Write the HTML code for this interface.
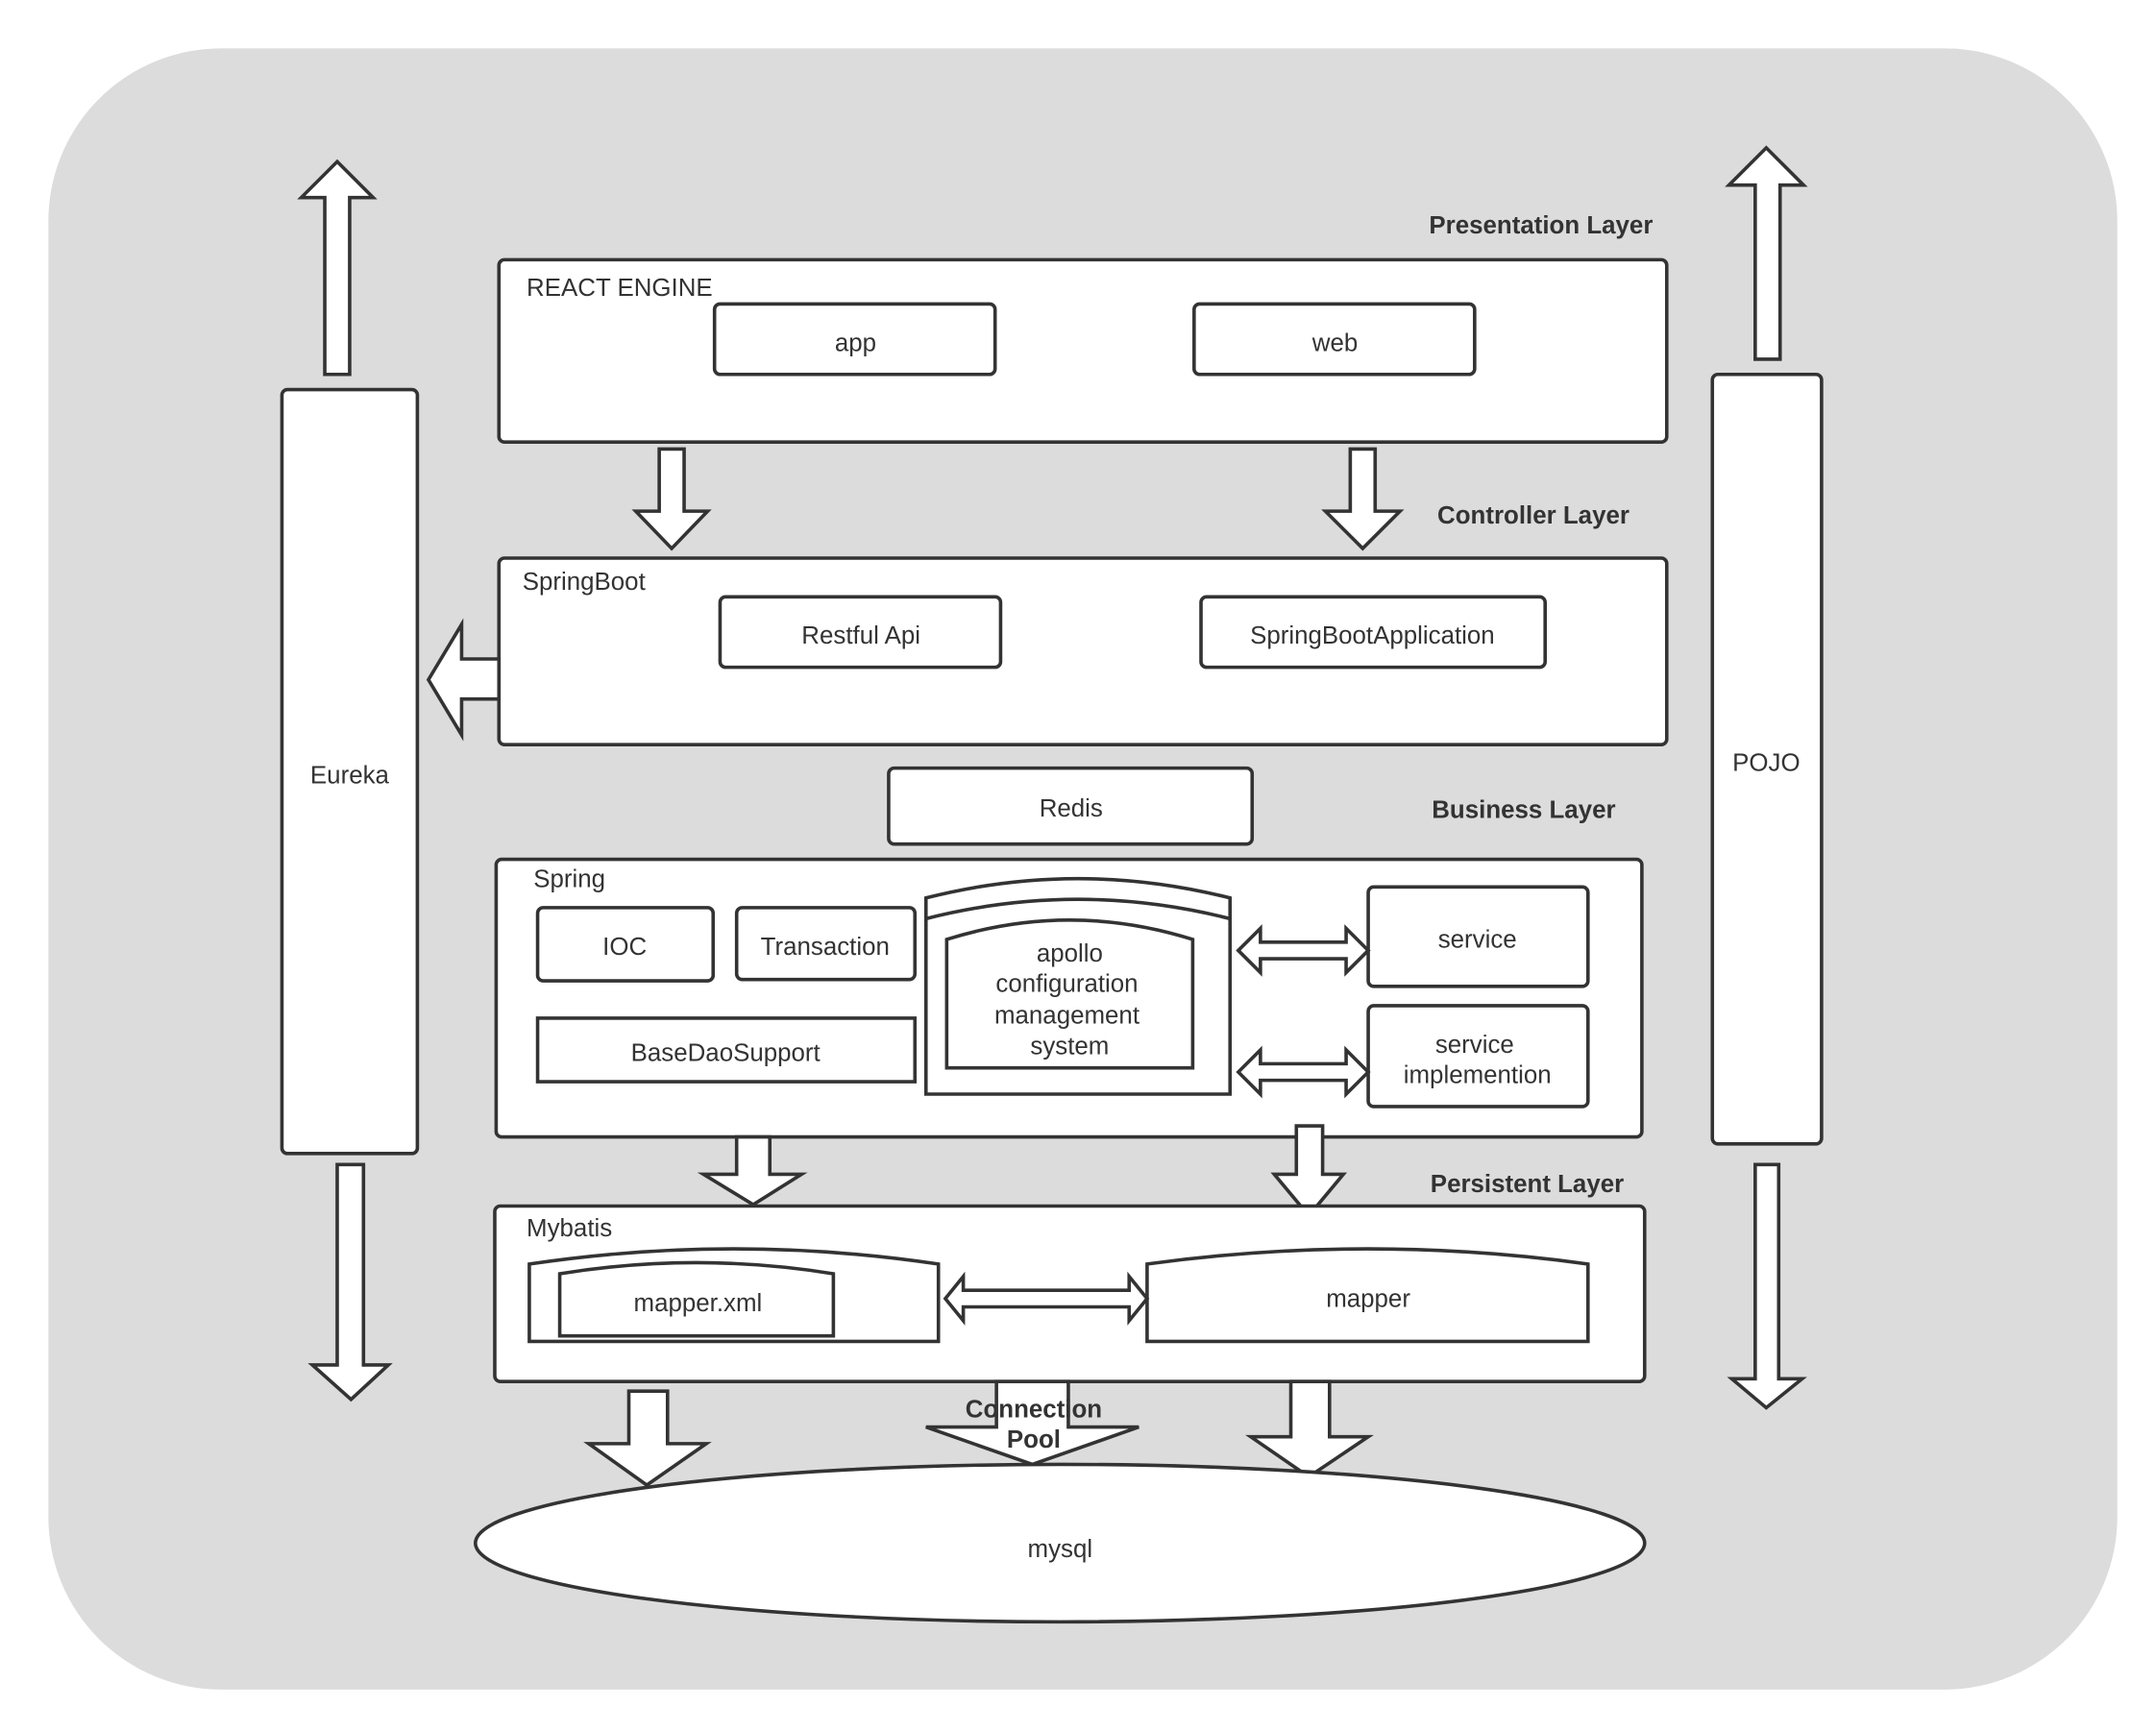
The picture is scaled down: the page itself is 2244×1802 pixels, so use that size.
<!DOCTYPE html>
<html><head><meta charset="utf-8"><style>
html,body{margin:0;padding:0;background:#fff;}
svg{display:block;}
text{font-family:"Liberation Sans","DejaVu Sans",sans-serif;fill:#333;font-size:18px;}
.b{font-weight:bold;font-size:18px;}
</style></head><body>
<svg width="2244" height="1802" viewBox="0 0 1560 1253" preserveAspectRatio="none" xmlns="http://www.w3.org/2000/svg">
<rect x="0" y="0" width="1560" height="1253" fill="#fff"/>
<rect x="35" y="35" width="1497" height="1188" rx="125" fill="#dcdcdc"/>
<g fill="#fff" stroke="#333" stroke-width="2.5" stroke-linejoin="miter">
<!-- side arrows -->
<polygon points="235,271 235,143 218,143 244,117 270,143 253,143 253,271"/>
<polygon points="244,843 244,988 226,988 254,1013 281,988 263,988 263,843"/>
<polygon points="1270,260 1270,134 1251,134 1278,107 1305,134 1288,134 1288,260"/>
<polygon points="1270,843 1270,998 1253,998 1278,1019 1304,998 1287,998 1287,843"/>
<rect x="204" y="282" width="98" height="553" rx="4"/>
<rect x="1239" y="271" width="79" height="557" rx="4"/>
<!-- presentation -->
<rect x="361" y="188" width="845" height="132" rx="4"/>
<rect x="517" y="220" width="203" height="51" rx="4"/>
<rect x="864" y="220" width="203" height="51" rx="4"/>
<polygon points="477,325 477,370 460,370 486,397 512,370 495,370 495,325"/>
<polygon points="977,325 977,370 959,370 986,397 1013,370 995,370 995,325"/>
<!-- springboot -->
<rect x="361" y="404" width="845" height="135" rx="4"/>
<rect x="521" y="432" width="203" height="51" rx="4"/>
<rect x="869" y="432" width="249" height="51" rx="4"/>
<polygon points="361,477 334,477 334,452 310,492 334,532 334,506 361,506"/>
<rect x="643" y="556" width="263" height="55" rx="4"/>
<!-- spring -->
<rect x="359" y="622" width="829" height="201" rx="4"/>
<rect x="389" y="657" width="127" height="53" rx="4"/>
<rect x="533" y="657" width="129" height="52" rx="4"/>
<rect x="389" y="737" width="273" height="46"/>
<path d="M670,792 L670,650 Q780,622 890,650 L890,792 Z"/>
<path d="M670,665 Q780,637 890,665"/>
<path d="M685,773 L685,680 Q774,652 863,680 L863,773 Z"/>
<rect x="990" y="642" width="159" height="72" rx="4"/>
<rect x="990" y="728" width="159" height="73" rx="4"/>
<polygon points="896,688 912,672 912,682 974,682 974,672 990,688 974,704 974,694 912,694 912,704"/>
<polygon points="896,776 912,760 912,770 974,770 974,760 990,776 974,792 974,782 912,782 912,792"/>
<polygon points="533,823 533,850 509,850 545,872 580,850 557,850 557,823"/>
<polygon points="938,815 938,850 922,850 947,880 972,850 957,850 957,815"/>
<!-- mybatis -->
<rect x="358" y="873" width="832" height="127" rx="4"/>
<path d="M383,971 L383,915 Q531,893 679,915 L679,971 Z"/>
<path d="M405,967 L405,922 Q504,906 603,922 L603,967 Z"/>
<path d="M830,971 L830,915 Q990,893 1149,915 L1149,971 Z"/>
<polygon points="684,940 697,924 697,934 817,934 817,924 830,940 817,956 817,946 697,946 697,956"/>
<!-- bottom arrows -->
<polygon points="455,1007 455,1045 426,1045 468,1075 511,1045 483,1045 483,1007"/>
<polygon points="721,1000 721,1033 670,1033 747,1060 824,1033 773,1033 773,1000"/>
<polygon points="934,1000 934,1040 905,1040 947,1069 990,1040 962,1040 962,1000"/>
<ellipse cx="767" cy="1117" rx="423" ry="57"/>
</g>
<text class="b" x="1196" y="169" text-anchor="end">Presentation Layer</text>
<text class="b" x="1179" y="379" text-anchor="end">Controller Layer</text>
<text class="b" x="1169" y="592" text-anchor="end">Business Layer</text>
<text class="b" x="1175" y="863" text-anchor="end">Persistent Layer</text>
<text class="b" x="748" y="1026" text-anchor="middle">Connection</text>
<text class="b" x="748" y="1048" text-anchor="middle">Pool</text>
<text x="381" y="214">REACT ENGINE</text>
<text x="619" y="254" text-anchor="middle">app</text>
<text x="966" y="254" text-anchor="middle">web</text>
<text x="378" y="427">SpringBoot</text>
<text x="623" y="466" text-anchor="middle">Restful Api</text>
<text x="993" y="466" text-anchor="middle">SpringBootApplication</text>
<text x="253" y="567" text-anchor="middle">Eureka</text>
<text x="1278" y="558" text-anchor="middle">POJO</text>
<text x="775" y="591" text-anchor="middle">Redis</text>
<text x="386" y="642">Spring</text>
<text x="452" y="691" text-anchor="middle">IOC</text>
<text x="597" y="691" text-anchor="middle">Transaction</text>
<text x="525" y="768" text-anchor="middle">BaseDaoSupport</text>
<text x="774" y="696" text-anchor="middle">apollo</text>
<text x="772" y="718" text-anchor="middle">configuration</text>
<text x="772" y="741" text-anchor="middle">management</text>
<text x="774" y="763" text-anchor="middle">system</text>
<text x="1069" y="686" text-anchor="middle">service</text>
<text x="1067" y="762" text-anchor="middle">service</text>
<text x="1069" y="784" text-anchor="middle">implemention</text>
<text x="381" y="895">Mybatis</text>
<text x="505" y="949" text-anchor="middle">mapper.xml</text>
<text x="990" y="946" text-anchor="middle">mapper</text>
<text x="767" y="1127" text-anchor="middle">mysql</text>
</svg>
</body></html>
